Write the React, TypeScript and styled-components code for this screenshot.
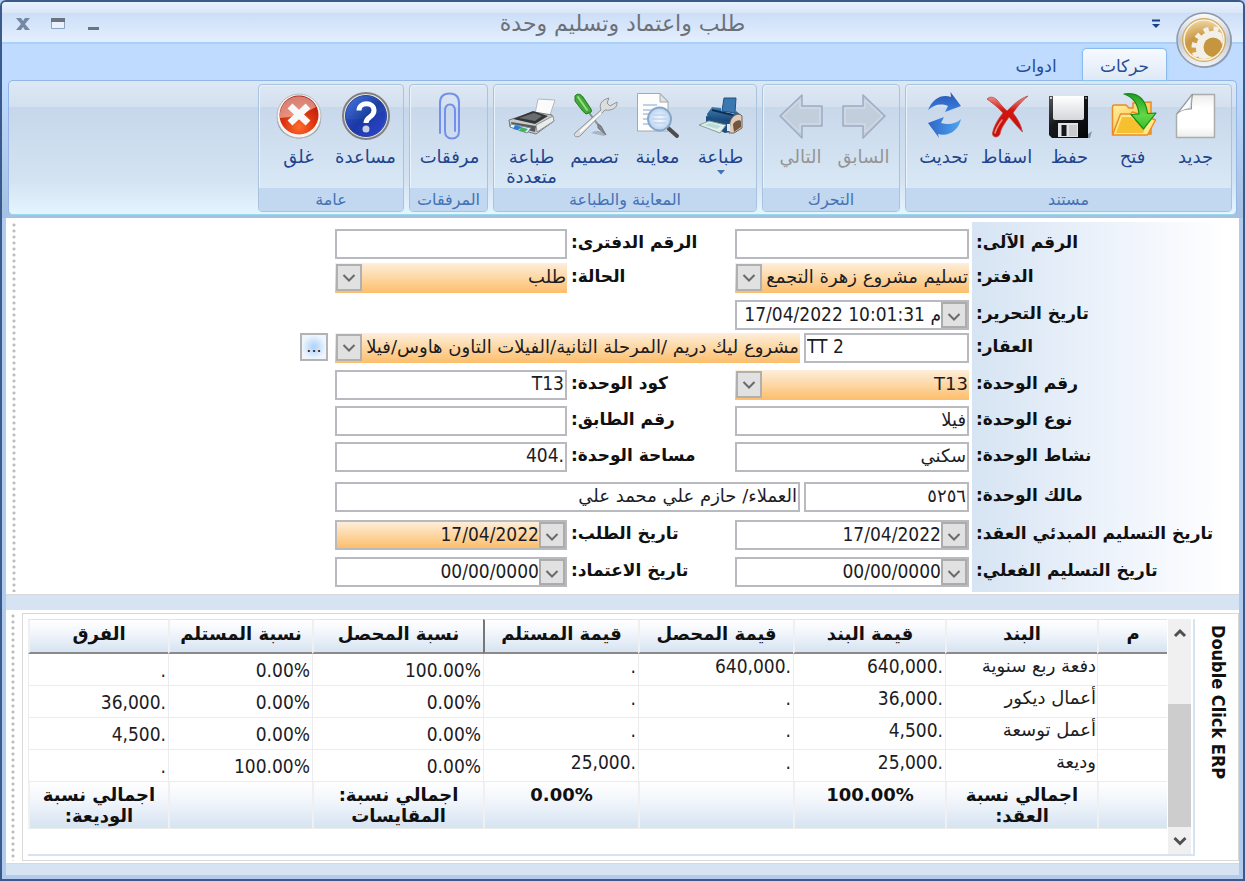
import React, { useState } from 'react';
import styled, { createGlobalStyle, css } from 'styled-components';

const GlobalStyle = createGlobalStyle`
  *, *::before, *::after { box-sizing: border-box; }
  body {
    margin: 0;
    font-family: 'DejaVu Sans', sans-serif;
    font-size: 18px;
    color: #1c1c24;
    background: #b1cbee;
  }
  button, input, select { font: inherit; color: inherit; margin: 0; }
`;

const narrow = css`
  font-family: 'DejaVu Sans Condensed', 'DejaVu Sans', sans-serif;
  font-size: 19px;
`;

/* ---------- window frame ---------- */

const Window = styled.main`
  display: flex;
  flex-direction: column;
  min-height: 100vh;
  border: 2px solid #3b5a8c;
  border-radius: 6px 6px 0 0;
  background: #b1cbee;
  overflow: hidden;
`;

const TitleBar = styled.header`
  position: relative;
  display: grid;
  grid-template-columns: 1fr auto 1fr;
  align-items: center;
  height: 42px;
  padding: 4px 12px 0;
  border-bottom: 2px solid #a9d0f9;
  background: linear-gradient(#e6f1fe 0, #d9e6f7 11px, #ccdef7 11px, #e3effe 100%);
`;

const Title = styled.h1`
  margin: 0;
  font-size: 22px;
  line-height: 26px;
  font-weight: 400;
  color: #6c7178;
`;

const WindowButtons = styled.div`
  display: flex;
  justify-content: flex-end;
  gap: 17px;
`;

const FlatButton = styled.button`
  display: flex;
  align-items: center;
  justify-content: center;
  width: 18px;
  height: 20px;
  padding: 0;
  border: 0;
  background: none;
`;

const QuickAccess = styled.div`
  padding-inline-start: 66px;
`;

const AppButton = styled.button`
  position: absolute;
  top: 9px;
  right: 10px;
  z-index: 2;
  width: 58px;
  height: 58px;
  padding: 0;
  border: 0;
  background: none;
`;

const TabStrip = styled.nav`
  display: flex;
  align-items: flex-end;
  height: 36px;
  padding: 0 76px 0 0;
  background: #bfdbff;
`;

const Tab = styled.button<{ $active?: boolean }>`
  position: relative;
  height: 32px;
  width: ${(p) => (p.$active ? '85px' : '92px')};
  padding: 3px 0 0;
  border: 1px solid ${(p) => (p.$active ? '#8db9ee' : 'transparent')};
  border-bottom: 0;
  border-radius: 5px 5px 0 0;
  font-size: 17px;
  line-height: 20px;
  color: #274d93;
  background: ${(p) => (p.$active ? 'linear-gradient(#f6faff, #dfe9f6)' : 'none')};
  ${(p) => p.$active && css`box-shadow: 0 0 3px #7fe0ff; z-index: 1;`}
`;

/* ---------- ribbon ---------- */

const RibbonArea = styled.div`
  padding: 0 6px 3px;
  background: linear-gradient(#bfdbff, #a5c0e2);
`;

const Ribbon = styled.div`
  display: flex;
  gap: 5px;
  padding: 3px 4px 2px;
  border: 1px solid #92b7e6;
  border-bottom-color: #9ad9e8;
  border-radius: 5px;
  background: linear-gradient(#dde8f5 0, #d3e0ef 26px, #c6d7eb 26px, #d3e3f2 75%, #e4f5ff 100%);
`;

const Group = styled.section`
  display: flex;
  flex-direction: column;
  border: 1px solid #a9c3de;
  border-radius: 4px;
  box-shadow: inset 1px 1px 0 #eaf2fb;
  overflow: hidden;
  background: linear-gradient(#dee8f4 0, #d4e0ef 22px, #c8d8eb 22px, #d9e8f5 103px);
`;

const GroupBody = styled.div`
  display: flex;
  justify-content: center;
  height: 103px;
  padding: 7px 4px 0 6px;
`;

const GroupName = styled.h2`
  margin: 0;
  height: 23px;
  font-size: 16px;
  line-height: 24px;
  font-weight: 400;
  text-align: center;
  color: #4572b5;
  background: #c1d8f0;
`;

const ToolButton = styled.button<{ $wide?: boolean }>`
  display: flex;
  flex-direction: column;
  align-items: center;
  width: ${(p) => (p.$wide ? '67px' : '63px')};
  padding: 0;
  border: 0;
  background: none;
  font-size: 18px;
  line-height: 20px;
  color: #1f458f;
  svg { display: block; flex: none; }
  &:disabled { color: #949494; }
`;

const ToolText = styled.span`
  width: min-content;
  padding-top: 7px;
  text-align: center;
`;

const MenuMark = styled.svg`
  margin-top: 3px;
`;

/* ---------- form ---------- */

const Page = styled.div`
  display: flex;
  flex-direction: column;
  flex: 1;
  margin: 0 4px 4px;
  background: #d6e3f3;
`;

const DotStrip = styled.div`
  flex: none;
  width: 4px;
  margin-inline: 7px 6px;
  background: radial-gradient(circle, #bdbdbd 1px, transparent 2px) 0 0 / 4px 6px;
`;

const FormPane = styled.div`
  display: flex;
  padding: 4px 0 2px;
  border-bottom: 1px solid #d9d9d9;
  background: #fff;
`;

const Form = styled.form`
  flex: 1;
  display: grid;
  grid-template-columns: 267px 237px 168px 232px 1fr;
  grid-template-rows: 34px 37px 33px 37px 36px 36px 40px 38px 37px 35px;
  padding-top: 7px;
  background: linear-gradient(to left, #fff 10px, #edf3fb 130px, #d6e4f3 267px) no-repeat right top / 267px 100%;
`;

const Label = styled.label<{ $col: number; $row: number }>`
  grid-column: ${(p) => p.$col};
  grid-row: ${(p) => p.$row};
  padding-left: 4px;
  font-size: 17px;
  line-height: 26px;
  font-weight: 700;
  color: #101010;
  white-space: nowrap;
  text-align: left;
`;

const Slot = styled.div<{ $col: string; $row: number }>`
  grid-column: ${(p) => p.$col};
  grid-row: ${(p) => p.$row};
  display: flex;
  gap: 4px;
  min-width: 0;
  height: 30px;
  padding-right: ${(p) => (p.$col === '4' ? '0' : '3px')};
`;

const amber = css`background: linear-gradient(#fdeedb 0, #fdd9a8 45%, #fcbe6b 100%);`;

const Text = styled.input<{ $w?: string; $latin?: boolean; $left?: boolean }>`
  flex: ${(p) => p.$w ?? '1'};
  min-width: 0;
  height: 30px;
  padding: 0 1px 4px;
  border: 2px solid #b9b9c0;
  border-radius: 0;
  background: #fff;
  outline: 0;
  text-align: ${(p) => (p.$left ? 'left' : 'right')};
  ${(p) => p.$latin && narrow}
`;

const DateBox = styled.div<{ $amber?: boolean }>`
  flex: 1;
  display: flex;
  min-width: 0;
  height: 30px;
  border: 2px solid #b9b9c0;
  background: #fff;
  ${(p) => p.$amber && amber}
  input {
    flex: 1;
    min-width: 0;
    padding: 0 0 3px;
    border: 0;
    outline: 0;
    background: none;
    text-align: right;
    ${narrow}
  }
`;

const DropButton = styled.button`
  flex: none;
  display: flex;
  align-items: center;
  justify-content: center;
  width: 26px;
  padding: 3px 0 0;
  border: 2px solid #acacac;
  background: #e1e1e1;
`;

const ComboBox = styled.div`
  position: relative;
  flex: 1;
  display: flex;
  min-width: 0;
  height: 30px;
  ${amber}
  select {
    flex: 1;
    min-width: 0;
    padding: 0 1px 4px 27px;
    border: 0;
    outline: 0;
    appearance: none;
    background: none;
  }
`;

const ComboArrow = styled.span`
  position: absolute;
  left: 1px;
  top: 1px;
  display: flex;
  align-items: center;
  justify-content: center;
  width: 26px;
  height: 27px;
  border: 2px solid #b0b0b0;
  background: #e1e1e1;
  pointer-events: none;
`;

const MoreSlot = styled.div`
  grid-column: 5;
  grid-row: 4;
  padding-right: 7px;
`;

const MoreButton = styled.button`
  width: 28px;
  height: 28px;
  padding: 0;
  border: 2px solid #b3b3b3;
  background: radial-gradient(circle, #b4d6fa 10%, #eef5fd 70%);
  font-size: 16px;
  line-height: 20px;
`;

/* ---------- grid of items ---------- */

const Splitter = styled.div<{ $thin?: boolean }>`
  height: ${(p) => (p.$thin ? '11px' : '15px')};
  background: #d6e3f3;
`;

const BottomPane = styled.section`
  flex: 1;
  display: flex;
  padding: 3px 0 2px;
  border-bottom: 1px solid #d9d9d9;
  background: #fff;
`;

const SideTitle = styled.h2`
  flex: none;
  width: 44px;
  margin: 0;
  padding: 11px 8px 0;
  border: 1px solid #d9d9d9;
  border-left: 0;
  writing-mode: vertical-rl;
  direction: ltr;
  font-family: 'DejaVu Sans Condensed', 'DejaVu Sans', sans-serif;
  font-size: 18px;
  line-height: 24px;
  font-weight: 700;
  color: #101010;
`;

const GridFrame = styled.div`
  flex: 1;
  display: flex;
  align-items: stretch;
  padding: 5px 0 4px 5px;
  border: 1px solid #d9d9d9;
  border-right: 0;
`;

const GridInner = styled.div`
  flex: 1;
  display: flex;
  gap: 1px;
  padding-right: 2px;
  border-right: 2px solid #d6e3f3;
  border-bottom: 2px solid #d6e3f3;
`;

const ScrollBar = styled.div`
  flex: none;
  display: flex;
  flex-direction: column;
  width: 23px;
  background: #f0f0f0;
`;

const ScrollButton = styled.button`
  display: flex;
  align-items: center;
  justify-content: center;
  height: 27px;
  padding: 0;
  border: 0;
  background: none;
`;

const ScrollTrack = styled.div`
  flex: 1;
  display: flex;
  flex-direction: column;
  justify-content: flex-end;
`;

const ScrollThumb = styled.div`
  height: 68%;
  background: #cdcdcd;
`;

const Table = styled.table`
  flex: 1;
  align-self: flex-start;
  table-layout: fixed;
  width: 100%;
  border-collapse: separate;
  border-spacing: 0;
`;

const shade = css`background: linear-gradient(#ffffff 0, #f2f6fb 40%, #d6e3f2 100%);`;

const HeadCell = styled.th<{ $mark?: boolean }>`
  height: 35px;
  padding: 0 0 4px;
  border-top: 1px solid #e3e3e3;
  border-bottom: 2px solid #8a8a8a;
  border-left: ${(p) => (p.$mark ? '2px solid #777' : '2px solid #f0f0f0')};
  font-size: 18px;
  line-height: 22px;
  font-weight: 700;
  color: #101010;
  white-space: nowrap;
  ${shade}
`;

const Cell = styled.td<{ $kind: 'text' | 'sum' | 'rate' }>`
  height: 32px;
  padding: 0 1px;
  border-left: 1px solid #ececec;
  border-bottom: 1px solid #ececec;
  line-height: 24px;
  vertical-align: ${(p) => (p.$kind === 'rate' ? 'middle' : 'top')};
  text-align: right;
  direction: ${(p) => (p.$kind === 'text' ? 'rtl' : 'ltr')};
  white-space: nowrap;
  ${(p) => p.$kind !== 'text' && narrow}
`;

const TotalCell = styled.td`
  height: 47px;
  padding: 2px 0 0;
  border-left: 2px solid #f0f0f0;
  border-bottom: 1px solid #ececec;
  text-align: center;
  vertical-align: top;
  font-size: 18px;
  line-height: 21px;
  font-weight: 700;
  color: #101010;
  white-space: pre-line;
  ${shade}
`;

/* ---------- drawings ---------- */

const Chevron = ({ up, bold }: { up?: boolean; bold?: boolean }) => (
  <svg width="14" height="10" viewBox="0 0 14 10" aria-hidden="true">
    <path d={up ? 'M2 8l5-5 5 5' : 'M1.500 2l5.500 5.500L12.500 2'} fill="none" stroke={bold ? '#505050' : '#6a6a6a'} strokeWidth={bold ? 3 : 2} />
  </svg>
);

const I = ({ children }: { children: React.ReactNode }) => (
  <svg width="48" height="48" viewBox="0 0 48 48" aria-hidden="true">{children}</svg>
);

const NewIcon = () => (
  <I>
    <defs><linearGradient id="pg" x1="0" y1="0" x2="0" y2="1"><stop offset="0" stopColor="#ececea" /><stop offset=".3" stopColor="#fff" /><stop offset=".75" stopColor="#fff" /><stop offset="1" stopColor="#eceeea" /></linearGradient></defs>
    <path d="M20 2.500h22.500v43h-38v-23z" fill="url(#pg)" stroke="#a9adae" strokeWidth="1.500" strokeLinejoin="round" />
    <path d="M20.500 2.500c-1 6-1 10-1 14.500-6 0-11 1-14.500 5z" fill="#d9dde2" stroke="#8f9499" strokeLinejoin="round" />
    <path d="M8 19c4-4 7-9 11-14l-1.500 10.500z" fill="#f9fafb" />
  </I>
);

const OpenIcon = () => (
  <I>
    <defs>
      <linearGradient id="fo" x1="0" y1="0" x2="1" y2="1"><stop offset="0" stopColor="#fff3a6" /><stop offset="1" stopColor="#f5b32c" /></linearGradient>
      <linearGradient id="fg" x1="0" y1="0" x2="0" y2="1"><stop offset="0" stopColor="#1f9e1f" /><stop offset=".6" stopColor="#63d847" /><stop offset="1" stopColor="#35c026" /></linearGradient>
    </defs>
    <path d="M3.500 42V15q0-2 2-2H17l3 3h4V11l18-1v32z" fill="url(#fo)" stroke="#e88b28" strokeWidth="1.500" />
    <path d="M3.500 43l8-21h10l2-2 13 4 10 4-8 15z" fill="#ffe98a" stroke="#f08a24" strokeWidth="1.500" strokeLinejoin="round" />
    <path d="M7 41l6-16h9l3 3h15l-6 13z" fill="#f7c031" />
    <path d="M15 2c15-2 22 6 23.500 19.500l8.500-.5-12.500 16L22 22.500l8-.5C29 12 24 5 15 2z" fill="url(#fg)" stroke="#158a18" strokeWidth="1.200" strokeLinejoin="round" />
  </I>
);

const SaveIcon = () => (
  <I>
    <defs><linearGradient id="sv" x1="0" y1="0" x2="1" y2="1"><stop offset="0" stopColor="#55595e" /><stop offset=".4" stopColor="#17191b" /><stop offset="1" stopColor="#050505" /></linearGradient>
      <linearGradient id="sl" x1="0" y1="0" x2="0" y2="1"><stop offset="0" stopColor="#fff" /><stop offset="1" stopColor="#d4d7da" /></linearGradient></defs>
    <path d="M38 45l8-6-2 7H12z" fill="#6d7784" opacity=".7" />
    <path d="M3 4h39v42H6l-3-3z" fill="url(#sv)" />
    <path d="M7 4h31v22q0 2-2 2H9q-2 0-2-2z" fill="url(#sl)" />
    <path d="M12 31h20v14H12z" fill="#e2e3e5" />
    <path d="M15.500 33h5v11h-5z" fill="#15171a" />
    <path d="M23 33h8v11h-8z" fill="#b9bcbf" opacity=".6" />
    <circle cx="5" cy="6" r="1" fill="#fff" /><circle cx="40" cy="6" r="1" fill="#999" />
  </I>
);

const DropIcon = () => (
  <I>
    <defs><linearGradient id="dx" x1="0" y1="0" x2="0" y2="1"><stop offset="0" stopColor="#f0938c" /><stop offset=".35" stopColor="#d3150f" /><stop offset="1" stopColor="#c4100c" /></linearGradient></defs>
    <path d="M4 7c3-3 7-2 10 1 4 5 7 8 10 11C30 13 36 7 45 4c-7 6-11 11-15 17 5 6 8 12 9.500 19-5-5-9-10-13.500-15-4 6-8 11-9 17-1.500 4-8 4-7.500-1C11 34 15 27 20 21 15 15 9 11 4 7z" fill="url(#dx)" stroke="#c3463f" strokeWidth=".8" />
    <path d="M12 41c1-4 4-9 7-13" stroke="#ee8a80" strokeWidth="1.500" fill="none" strokeLinecap="round" />
  </I>
);

const RefreshIcon = () => (
  <I>
    <defs>
      <linearGradient id="ra" x1="0" y1="0" x2="0" y2="1"><stop offset="0" stopColor="#2b57b4" /><stop offset="1" stopColor="#3a7fe0" /></linearGradient>
      <linearGradient id="rb" x1="0" y1="0" x2="1" y2="0"><stop offset="0" stopColor="#2e66c8" /><stop offset="1" stopColor="#4fa6f2" /></linearGradient>
    </defs>
    <path d="M8 18C13 6 22 2 31 5l-.5-5L41 14l-16 6 3-6c-8-3-14-1-20 4z" fill="url(#ra)" />
    <path d="M41 27c-2 11-12 18-23 15l1 4L8 31l16-6-3 6c7 2 15 1 20-4z" fill="url(#rb)" />
  </I>
);

const ArrowIcon = ({ back }: { back?: boolean }) => (
  <I>
    <path d={back ? 'M45 14H25V3L3 24l22 22V34h20z' : 'M3 14h20V3l22 21-22 22V34H3z'} fill="#c3cedd" stroke="#9eacc2" strokeWidth="1.500" strokeLinejoin="round" />
    <path d={back ? 'M43 16H23V8L6 24l17 16v-8h20z' : 'M5 16h20V8l17 16-17 16v-8H5z'} fill="none" stroke="#d6dfea" strokeWidth="1" />
  </I>
);

const PrintIcon = () => (
  <I>
    <defs><linearGradient id="pb" x1="0" y1="0" x2="0" y2="1"><stop offset="0" stopColor="#3f7fb8" /><stop offset="1" stopColor="#123a66" /></linearGradient></defs>
    <path d="M27 6l12 0-1 15-13-2z" fill="#3c78b0" stroke="#1e5183" />
    <path d="M10 22l5-7 9 1v4l12 2 3-3 5 4-9 9-24-4z" fill="url(#pb)" />
    <path d="M15 18l21 5" stroke="#0d2e50" strokeWidth="2" />
    <path d="M9 24l24 6v10l-5 1-19-9z" fill="#1e4f80" />
    <path d="M33 30c2-7 9-10 12-6v12l-8 5h-5z" fill="#dccdbd" stroke="#6e6258" />
    <path d="M36 33c0-3 6-6 8-4v6l-7 5z" fill="#74553e" />
    <path d="M2 33l10-4 17 4-6 8z" fill="#e3efe9" stroke="#85a19f" />
    <path d="M7 33l6-2 11 3-4 3z" fill="#b9dcda" />
    <path d="M30 32h3v7h-3z" fill="#d9e8ff" />
  </I>
);

const PreviewIcon = () => (
  <I>
    <defs><radialGradient id="lens"><stop offset="0" stopColor="#fbfdff" /><stop offset="1" stopColor="#b5d2f2" /></radialGradient></defs>
    <path d="M3.500 1.500H26l8 8V39H3.500z" fill="#fdfdfd" stroke="#a5a9ae" />
    <path d="M26 1.500V10h8z" fill="#dfe3e8" stroke="#a5a9ae" strokeLinejoin="round" />
    <path d="M9 13h14M9 18h8M9 22h6M9 27h6M9 32h8" stroke="#a8c4e0" strokeWidth="1.500" />
    <path d="M33 35l10 9" stroke="#4d4d50" strokeWidth="4" strokeLinecap="round" />
    <circle cx="25.500" cy="27" r="11.500" fill="url(#lens)" stroke="#89a6c6" strokeWidth="2" />
    <path d="M19 23h13M18 27h15M19 31h13" stroke="#c1d4f0" strokeWidth="1.500" />
  </I>
);

const DesignIcon = () => (
  <I>
    <path d="M20 41c6-5 18 0 13 3z" fill="#7f8b9b" opacity=".5" />
    <path d="M19 22l9 12" stroke="#8b8f93" strokeWidth="2" strokeLinecap="round" />
    <path d="M27 32l3 2 5 9-8-7z" fill="#85898d" stroke="#6f7377" />
    <path d="M4 41L30 18c-2-5 0-9 5-11l3-1-2 5 3 3 7-4c1 6-6 9-12 8L9 44c-4 2-7 0-5-3z" fill="#dcdddd" stroke="#8f9497" />
    <path d="M9 40l21-19" stroke="#fbfbfb" strokeWidth="2" />
    <path d="M4 4c2-3 6-2 8 1l8 12c1 3 0 4-2 4l-3 1C12 20 7 13 4 9z" fill="#43a83a" stroke="#217b23" />
    <path d="M7 5l9 13" stroke="#96dc82" strokeWidth="2" strokeLinecap="round" />
  </I>
);

const MultiPrintIcon = () => (
  <I>
    <path d="M30 7l17 1-6 18-14-4z" fill="#fbfbfb" stroke="#b4b8bc" />
    <path d="M1 28l25-8 18 3 2 6-18 13-26-7z" fill="#c8cacb" stroke="#74787c" />
    <path d="M5 27l20-8 15 5-13 8z" fill="#333638" />
    <path d="M11 26l15-5 8 3-7 5z" fill="#696d70" />
    <path d="M28 33l17-9 1 5-17 11z" fill="#eaebeb" stroke="#909497" />
    <path d="M3 30l25 4-1 6-23-6z" fill="#55595c" />
    <path d="M3 32l20 4-4 5-17-6z" fill="#e8f4fb" stroke="#7d8a94" />
    <path d="M7 33l7 2-4 3-5-1z" fill="#2a7fd4" /><path d="M13 35l7 2-3 3-6-1z" fill="#45b06a" />
  </I>
);

const ClipIcon = () => (
  <I>
    <path d="M14 41V11q0-9.500 9.500-9.500T33 11v28q0 7.500-7 7.500T19 39V19q0-6.500 5-6.500t5 6.500v20" fill="none" stroke="#7391ea" strokeWidth="2" strokeLinecap="round" />
  </I>
);

const HelpIcon = () => (
  <I>
    <defs><linearGradient id="hp" x1="0" y1="0" x2="1" y2="1"><stop offset="0" stopColor="#4a79e8" /><stop offset=".5" stopColor="#1c3f9f" /><stop offset="1" stopColor="#3a55e4" /></linearGradient></defs>
    <circle cx="24" cy="24" r="23" fill="#e3e3e3" stroke="#818181" strokeWidth="2" />
    <circle cx="24" cy="24" r="20.500" fill="url(#hp)" stroke="#2a46a0" />
    <path d="M4 27Q24 30 43 18 44 44 24 44 7 44 4 27z" fill="#1b2fae" opacity=".35" />
    <path d="M17 18.500c0-9 15-9 15 0 0 7-8 6-8 12.500" fill="none" stroke="#fff" strokeWidth="5" />
    <circle cx="24" cy="37" r="3.500" fill="#c9cfe2" />
  </I>
);

const CloseIcon = () => (
  <I>
    <defs><radialGradient id="cl" cx=".5" cy=".8" r=".8"><stop offset="0" stopColor="#ff6d2c" /><stop offset=".5" stopColor="#dd3410" /><stop offset="1" stopColor="#a91707" /></radialGradient></defs>
    <ellipse cx="24" cy="27" rx="22" ry="19.500" fill="#8c8d90" />
    <circle cx="24" cy="24" r="22" fill="#f4f4f3" stroke="#b8b8ba" />
    <circle cx="24" cy="23" r="19.500" fill="url(#cl)" />
    <path d="M5 21a19 19 0 0 1 36-6Q24 25 5 26z" fill="#fff" opacity=".45" />
    <path d="M15 14l18 17M33 14L15 31" stroke="#f8f8f8" strokeWidth="7" />
  </I>
);

const AppLogo = () => (
  <svg width="58" height="58" viewBox="0 0 58 58" aria-hidden="true">
    <defs>
      <linearGradient id="ring" x1="0" y1="0" x2="0" y2="1"><stop offset="0" stopColor="#fafbfc" /><stop offset=".5" stopColor="#c5cad3" /><stop offset="1" stopColor="#f2f4f7" /></linearGradient>
      <radialGradient id="gold" cx=".5" cy=".95" r="1"><stop offset="0" stopColor="#dfae4c" /><stop offset=".55" stopColor="#cb9843" /><stop offset="1" stopColor="#f0dcae" /></radialGradient>
      <clipPath id="disc"><circle cx="29" cy="29" r="19" /></clipPath>
    </defs>
    <circle cx="30" cy="30" r="27" fill="#7a8799" opacity=".6" />
    <circle cx="29" cy="29" r="27" fill="url(#ring)" stroke="#8d98a9" strokeWidth="1.500" />
    <circle cx="29" cy="29" r="21.500" fill="#c99a44" stroke="#d3ae68" />
    <circle cx="29" cy="29" r="20" fill="url(#gold)" stroke="#fdf2da" strokeWidth="1.500" />
    <g clipPath="url(#disc)">
      <g fill="none" stroke="#f3f0ea">
        <circle cx="38" cy="37" r="13" strokeWidth="8" />
        <circle cx="38" cy="37" r="19" strokeWidth="5" strokeDasharray="5 4.950" />
      </g>
      <circle cx="38" cy="36" r="9.500" fill="#c5953f" />
    </g>
  </svg>
);

/* ---------- data ---------- */

type Tool = { text: string; icon: React.ReactNode; disabled?: boolean; menu?: boolean };

const groups: { name: string; wide?: boolean; tools: Tool[] }[] = [
  { name: 'مستند', tools: [
    { text: 'جديد', icon: <NewIcon /> },
    { text: 'فتح', icon: <OpenIcon /> },
    { text: 'حفظ', icon: <SaveIcon /> },
    { text: 'اسقاط', icon: <DropIcon /> },
    { text: 'تحديث', icon: <RefreshIcon /> },
  ] },
  { name: 'التحرك', tools: [
    { text: 'السابق', icon: <ArrowIcon />, disabled: true },
    { text: 'التالي', icon: <ArrowIcon back />, disabled: true },
  ] },
  { name: 'المعاينة والطباعة', tools: [
    { text: 'طباعة', icon: <PrintIcon />, menu: true },
    { text: 'معاينة', icon: <PreviewIcon /> },
    { text: 'تصميم', icon: <DesignIcon /> },
    { text: 'طباعة متعددة', icon: <MultiPrintIcon /> },
  ] },
  { name: 'المرفقات', wide: true, tools: [{ text: 'مرفقات', icon: <ClipIcon /> }] },
  { name: 'عامة', wide: true, tools: [
    { text: 'مساعدة', icon: <HelpIcon /> },
    { text: 'غلق', icon: <CloseIcon /> },
  ] },
];

type Kind = 'text' | 'date' | 'combo';
type Item = { id: string; label: string; row: number; second?: boolean; kind: Kind; value: string; ltr?: boolean; amber?: boolean };

const fields: Item[] = [
  { id: 'auto', label: 'الرقم الآلى:', row: 1, kind: 'text', value: '' },
  { id: 'book-no', label: 'الرقم الدفترى:', row: 1, second: true, kind: 'text', value: '' },
  { id: 'book', label: 'الدفتر:', row: 2, kind: 'combo', value: 'تسليم مشروع زهرة التجمع' },
  { id: 'state', label: 'الحالة:', row: 2, second: true, kind: 'combo', value: 'طلب' },
  { id: 'edited', label: 'تاريخ التحرير:', row: 3, kind: 'date', value: '17/04/2022 10:01:31 م' },
  { id: 'unit-no', label: 'رقم الوحدة:', row: 5, kind: 'combo', value: 'T13' },
  { id: 'unit-code', label: 'كود الوحدة:', row: 5, second: true, kind: 'text', value: 'T13', ltr: true },
  { id: 'unit-type', label: 'نوع الوحدة:', row: 6, kind: 'text', value: 'فيلا' },
  { id: 'floor', label: 'رقم الطابق:', row: 6, second: true, kind: 'text', value: '' },
  { id: 'activity', label: 'نشاط الوحدة:', row: 7, kind: 'text', value: 'سكني' },
  { id: 'area', label: 'مساحة الوحدة:', row: 7, second: true, kind: 'text', value: '404.', ltr: true },
  { id: 'contract', label: 'تاريخ التسليم المبدئي العقد:', row: 9, kind: 'date', value: '17/04/2022' },
  { id: 'request', label: 'تاريخ الطلب:', row: 9, second: true, kind: 'date', value: '17/04/2022', amber: true },
  { id: 'actual', label: 'تاريخ التسليم الفعلي:', row: 10, kind: 'date', value: '00/00/0000' },
  { id: 'approved', label: 'تاريخ الاعتماد:', row: 10, second: true, kind: 'date', value: '00/00/0000' },
];

const columns: { name: string; width: number; kind: 'text' | 'sum' | 'rate'; mark?: boolean }[] = [
  { name: 'م', width: 70, kind: 'text' },
  { name: 'البند', width: 152, kind: 'text' },
  { name: 'قيمة البند', width: 152, kind: 'sum' },
  { name: 'قيمة المحصل', width: 155, kind: 'sum' },
  { name: 'قيمة المستلم', width: 155, kind: 'sum', mark: true },
  { name: 'نسبة المحصل', width: 171, kind: 'rate' },
  { name: 'نسبة المستلم', width: 144, kind: 'rate' },
  { name: 'الفرق', width: 140, kind: 'rate' },
];

const rows = [
  ['', 'دفعة ربع سنوية', '640,000.', '640,000.', '.', '100.00%', '0.00%', '.'],
  ['', 'أعمال ديكور', '36,000.', '.', '.', '0.00%', '0.00%', '36,000.'],
  ['', 'أعمل توسعة', '4,500.', '.', '.', '0.00%', '0.00%', '4,500.'],
  ['', 'وديعة', '25,000.', '.', '25,000.', '0.00%', '100.00%', '.'],
];

const totals = ['', 'اجمالي نسبة\nالعقد:', '100.00%', '', '0.00%', 'اجمالي نسبة:\nالمقايسات', '', 'اجمالي نسبة\nالوديعة:'];

/* ---------- parts ---------- */

const Combo = ({ id, value, name }: { id: string; value: string; name?: string }) => (
  <ComboBox>
    <select id={id} aria-label={name} defaultValue={value}><option>{value}</option></select>
    <ComboArrow><Chevron /></ComboArrow>
  </ComboBox>
);

const DateInput = ({ id, value, amber: tinted }: { id: string; value: string; amber?: boolean }) => (
  <DateBox $amber={tinted}>
    <DropButton type="button" aria-label="اختيار التاريخ"><Chevron /></DropButton>
    <input id={id} dir="ltr" defaultValue={value} />
  </DateBox>
);

const Field = ({ f }: { f: Item }) => (
  <>
    <Label htmlFor={f.id} $row={f.row} $col={f.second ? 3 : 1}>{f.label}</Label>
    <Slot $row={f.row} $col={f.second ? '4' : '2'}>
      {f.kind === 'combo' && <Combo id={f.id} value={f.value} />}
      {f.kind === 'date' && <DateInput id={f.id} value={f.value} amber={f.amber} />}
      {f.kind === 'text' && <Text id={f.id} defaultValue={f.value} dir={f.ltr ? 'ltr' : 'rtl'} $latin={f.ltr} />}
    </Slot>
  </>
);

export default function App() {
  const [tab, setTab] = useState(0);
  return (
    <Window dir="rtl">
      <GlobalStyle />
      <TitleBar>
        <QuickAccess>
          <FlatButton aria-label="تخصيص">
            <svg width="10" height="10" viewBox="0 0 10 10"><path d="M1 1.500h8" stroke="#15428b" strokeWidth="2" /><path d="M1 5h8l-4 4z" fill="#15428b" /></svg>
          </FlatButton>
        </QuickAccess>
        <Title>طلب واعتماد وتسليم وحدة</Title>
        <WindowButtons>
          <FlatButton aria-label="تصغير"><svg width="14" height="14" viewBox="0 0 14 14"><path d="M2 10h11v3H2z" fill="#6c7480" /></svg></FlatButton>
          <FlatButton aria-label="تكبير"><svg width="14" height="14" viewBox="0 0 14 14"><path d="M.500 3.500h13v8H.500z" fill="#eaf3fd" stroke="#8ba3c4" /><path d="M0 1h14v4H0z" fill="#6c7480" /></svg></FlatButton>
          <FlatButton aria-label="إغلاق"><svg width="14" height="14" viewBox="0 0 14 14"><path d="M0 1h5l2 3 2-3h5L9 7l5 6H9L7 10l-2 3H0l5-6z" fill="#7487a4" /></svg></FlatButton>
        </WindowButtons>
        <AppButton aria-label="القائمة"><AppLogo /></AppButton>
      </TitleBar>
      <TabStrip>
        {['حركات', 'ادوات'].map((t, i) => (
          <Tab key={t} $active={tab === i} onClick={() => setTab(i)}>{t}</Tab>
        ))}
      </TabStrip>
      <RibbonArea>
        <Ribbon>
          {groups.map((g) => (
            <Group key={g.name}>
              <GroupBody>
                {g.tools.map((t) => (
                  <ToolButton key={t.text} disabled={t.disabled} $wide={g.wide}>
                    {t.icon}
                    <ToolText>{t.text}</ToolText>
                    {t.menu && <MenuMark width="8" height="5" viewBox="0 0 8 5"><path d="M0 0h8L4 4.500z" fill="#4572b5" /></MenuMark>}
                  </ToolButton>
                ))}
              </GroupBody>
              <GroupName>{g.name}</GroupName>
            </Group>
          ))}
        </Ribbon>
      </RibbonArea>
      <Page>
        <FormPane>
          <Form onSubmit={(e) => e.preventDefault()}>
            {fields.map((f) => <Field key={f.id} f={f} />)}
            <Label htmlFor="estate" $row={4} $col={1}>العقار:</Label>
            <Slot $row={4} $col="2 / 5">
              <Text id="estate" $w="0 0 165px" $latin $left dir="ltr" defaultValue="TT 2" />
              <Combo id="estate-path" name="مسار العقار" value="مشروع ليك دريم /المرحلة الثانية/الفيلات التاون هاوس/فيلا" />
            </Slot>
            <MoreSlot><MoreButton type="button">...</MoreButton></MoreSlot>
            <Label htmlFor="owner" $row={8} $col={1}>مالك الوحدة:</Label>
            <Slot $row={8} $col="2 / 5">
              <Text id="owner" $w="0 0 165px" defaultValue="٥٢٥٦" />
              <Text aria-label="اسم المالك" defaultValue="العملاء/ حازم علي محمد علي" />
            </Slot>
          </Form>
          <DotStrip />
        </FormPane>
        <Splitter />
        <BottomPane>
          <SideTitle>Double Click ERP</SideTitle>
          <GridFrame>
            <GridInner>
              <ScrollBar>
                <ScrollButton aria-label="أعلى"><Chevron up bold /></ScrollButton>
                <ScrollTrack><ScrollThumb /></ScrollTrack>
                <ScrollButton aria-label="أسفل"><Chevron bold /></ScrollButton>
              </ScrollBar>
              <Table>
                <colgroup>{columns.map((c) => <col key={c.name} style={{ width: c.width }} />)}</colgroup>
                <thead><tr>{columns.map((c) => <HeadCell key={c.name} scope="col" $mark={c.mark}>{c.name}</HeadCell>)}</tr></thead>
                <tbody>
                  {rows.map((r) => (
                    <tr key={r[1]}>{r.map((v, i) => <Cell key={columns[i].name} $kind={columns[i].kind}>{v}</Cell>)}</tr>
                  ))}
                  <tr>{totals.map((v, i) => <TotalCell key={columns[i].name}>{v}</TotalCell>)}</tr>
                </tbody>
              </Table>
            </GridInner>
          </GridFrame>
          <DotStrip />
        </BottomPane>
        <Splitter $thin />
      </Page>
    </Window>
  );
}
